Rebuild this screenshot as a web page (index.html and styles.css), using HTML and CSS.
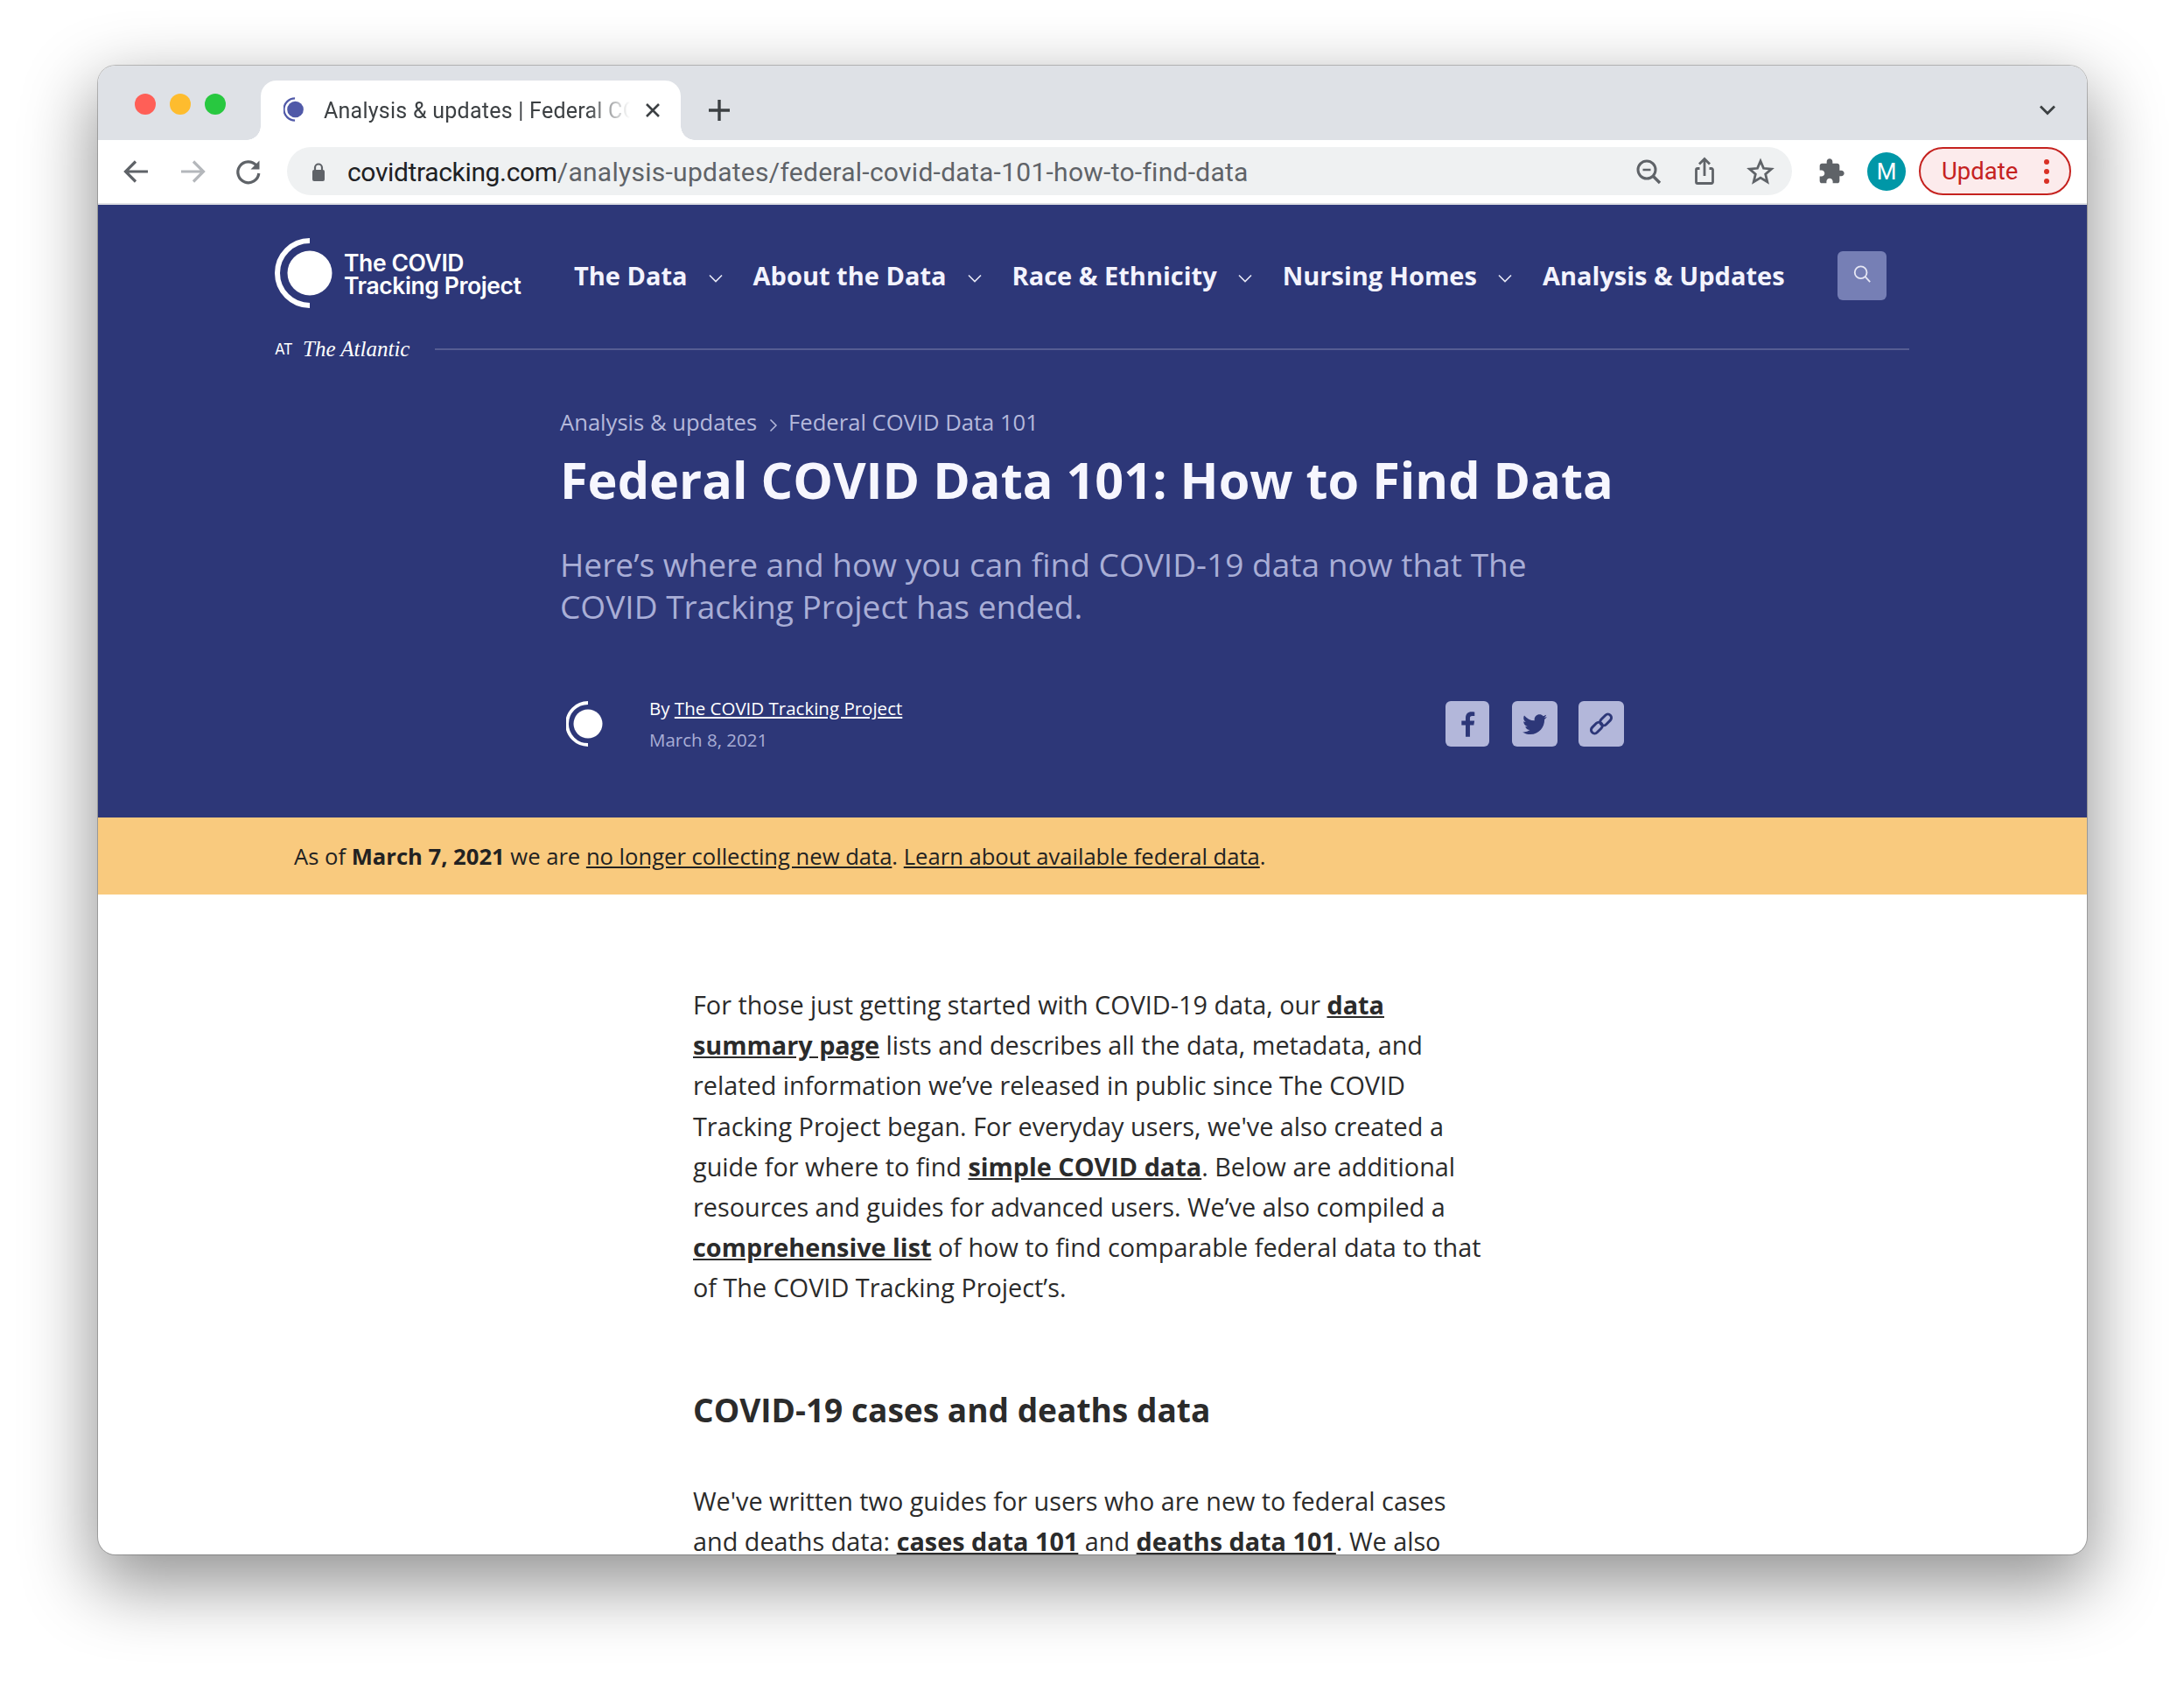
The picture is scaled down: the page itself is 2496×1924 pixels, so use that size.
FILE: index.html
```html
<!DOCTYPE html>
<html lang="en">

<head>
  <meta charset="UTF-8">
  <title>Analysis &amp; updates | Federal COVID Data 101</title>
  <link rel="stylesheet" href="styles.css">
</head>

<body>
  <div class="window">

    <div class="tabstrip">
      <div class="lights">
        <span class="light red"></span>
        <span class="light yellow"></span>
        <span class="light green"></span>
      </div>
      <div class="tab">
        <svg class="favicon" viewBox="0 0 30 30">
          <path d="M14 1.500A13.500 13.500 0 0 0 14 28.500" fill="none" stroke="#5059a8" stroke-width="2.400"/>
          <circle cx="14.500" cy="15" r="10" fill="#5059a8"/>
        </svg>
        <span class="tab-title">Analysis &amp; updates | Federal COVID Data 101</span>
        <svg class="tab-close" viewBox="0 0 20 20"><path d="M3 3l14 14M17 3L3 17" stroke="#3c4043" stroke-width="2.600" fill="none"/></svg>
      </div>
      <svg class="new-tab" viewBox="0 0 26 26"><path d="M13 1v24M1 13h24" stroke="#3c4043" stroke-width="3.400" fill="none"/></svg>
      <svg class="tab-list" viewBox="0 0 20 14"><path d="M2 2.500l8 8 8-8" stroke="#3c4043" stroke-width="2.800" fill="none"/></svg>
    </div>

    <div class="toolbar">
      <svg class="tool" viewBox="0 0 40 40"><path d="M33 20H9M19 8.500L7.500 20 19 31.500" stroke="#5f6368" stroke-width="3.200" fill="none"/></svg>
      <svg class="tool" viewBox="0 0 40 40"><path d="M7 20h24M21 8.500L32.500 20 21 31.500" stroke="#b4b7bb" stroke-width="3.200" fill="none"/></svg>
      <svg class="tool" viewBox="0 0 40 40">
        <path d="M29 13a12 12 0 1 0 2.800 9" stroke="#5f6368" stroke-width="3.200" fill="none"/>
        <path d="M32.500 7.500v10h-10z" fill="#5f6368"/>
      </svg>
      <div class="omnibox">
        <svg class="lock" viewBox="0 0 24 24">
          <path d="M8 11V7.500a4 4 0 0 1 8 0V11" stroke="#5f6368" stroke-width="2.200" fill="none"/>
          <rect x="5" y="10" width="14" height="13" rx="2" fill="#5f6368"/>
        </svg>
        <div class="url"><span class="host">covidtracking.com</span>/analysis-updates/federal-covid-data-101-how-to-find-data</div>
        <svg class="tool" viewBox="0 0 40 40">
          <circle cx="18" cy="18" r="10" stroke="#5f6368" stroke-width="3" fill="none"/>
          <path d="M13.500 18h9" stroke="#5f6368" stroke-width="2.400"/>
          <path d="M25 25l8 8" stroke="#5f6368" stroke-width="3.400"/>
        </svg>
        <svg class="tool" viewBox="0 0 40 40">
          <path d="M14.500 16.500H12a1.500 1.500 0 0 0-1.500 1.500v14A1.500 1.500 0 0 0 12 33.500h16a1.500 1.500 0 0 0 1.500-1.500V18a1.500 1.500 0 0 0-1.500-1.500h-2.500" stroke="#5f6368" stroke-width="2.800" fill="none"/>
          <path d="M20 25V6M14 11.500l6-6 6 6" stroke="#5f6368" stroke-width="2.800" fill="none"/>
        </svg>
        <svg class="tool" viewBox="0 0 40 40"><path d="M20 8l3.500 8.300 9 .8-6.800 5.900 2.100 8.800-7.800-4.700-7.800 4.700 2.100-8.800-6.800-5.900 9-.8z" stroke="#5f6368" stroke-width="2.800" fill="none"/></svg>
      </div>
      <svg class="puzzle" viewBox="0 0 24 24"><path fill="#5f6368" d="M20.500 11H19V7c0-1.100-.9-2-2-2h-4V3.500C13 2.120 11.880 1 10.500 1S8 2.120 8 3.500V5H4c-1.100 0-1.990.9-1.990 2v3.800H3.500c1.490 0 2.700 1.210 2.700 2.700s-1.210 2.700-2.700 2.700H2V20c0 1.100.9 2 2 2h3.800v-1.500c0-1.490 1.210-2.700 2.700-2.700 1.490 0 2.700 1.210 2.700 2.700V22H17c1.100 0 2-.9 2-2v-4h1.500c1.380 0 2.500-1.120 2.500-2.500S21.880 11 20.500 11z"/></svg>
      <div class="avatar">M</div>
      <div class="update">
        <span>Update</span>
        <span class="update-dots"><i></i><i></i><i></i></span>
      </div>
    </div>

    <header class="site-head">
      <div class="nav-row">
        <div class="logo">
          <svg class="logo-mark" viewBox="0 0 66 80">
            <path d="M40 3A37 37 0 0 0 40 77" fill="none" stroke="#fff" stroke-width="6"/>
            <circle cx="40" cy="40" r="25.500" fill="#fff"/>
          </svg>
          <div class="logo-text">The COVID<br>Tracking Project</div>
        </div>
        <nav class="nav">
          <a>The Data</a>
          <svg class="caret" viewBox="0 0 16 10"><path d="M1 1.500l7 7 7-7" stroke="#e8e9f6" stroke-width="1.600" fill="none"/></svg>
          <a>About the Data</a>
          <svg class="caret" viewBox="0 0 16 10"><path d="M1 1.500l7 7 7-7" stroke="#e8e9f6" stroke-width="1.600" fill="none"/></svg>
          <a>Race &amp; Ethnicity</a>
          <svg class="caret" viewBox="0 0 16 10"><path d="M1 1.500l7 7 7-7" stroke="#e8e9f6" stroke-width="1.600" fill="none"/></svg>
          <a>Nursing Homes</a>
          <svg class="caret" viewBox="0 0 16 10"><path d="M1 1.500l7 7 7-7" stroke="#e8e9f6" stroke-width="1.600" fill="none"/></svg>
          <a>Analysis &amp; Updates</a>
        </nav>
        <div class="search-btn">
          <svg viewBox="0 0 24 24"><circle cx="10.500" cy="10" r="7.500" stroke="#e6e7f4" stroke-width="2" fill="none"/><path d="M16 15.500l6 6.500" stroke="#e6e7f4" stroke-width="2"/></svg>
        </div>
      </div>
      <div class="atlantic-row">
        <span class="at">AT</span>
        <span class="atlantic">The Atlantic</span>
        <span class="rule"></span>
      </div>

      <div class="hero">
        <div class="crumbs">
          <span>Analysis &amp; updates</span>
          <svg viewBox="0 0 10 16"><path d="M1.500 1.500L8 8l-6.500 6.500" stroke="#b5b9db" stroke-width="1.500" fill="none"/></svg>
          <span>Federal COVID Data 101</span>
        </div>
        <h1>Federal COVID Data 101: How to Find Data</h1>
        <p class="dek">Here’s where and how you can find COVID-19 data now that The COVID Tracking Project has ended.</p>
        <div class="byline-row">
          <svg class="byline-mark" viewBox="0 0 44 52">
            <path d="M25 2A24 24 0 0 0 25 50" fill="none" stroke="#fff" stroke-width="3.800"/>
            <circle cx="25" cy="26" r="16.500" fill="#fff"/>
          </svg>
          <div class="byline">
            <div class="author">By <a>The COVID Tracking Project</a></div>
            <div class="date">March 8, 2021</div>
          </div>
          <div class="share">
            <div class="share-btn">
              <svg viewBox="0 0 24 24"><path fill="#2d3778" d="M14.200 23v-9.800h3.300l.6-3.800h-3.900V7.200c0-1.200.4-1.900 2-1.900h2V1.800C17.800 1.700 16.700 1.600 15.500 1.600c-3 0-5 1.800-5 5.100v2.700H7v3.800h3.500V23z"/></svg>
            </div>
            <div class="share-btn">
              <svg viewBox="0 0 24 24"><path fill="#2d3778" d="M22.460 6c-.77.35-1.600.58-2.460.69.880-.53 1.560-1.370 1.880-2.380-.83.5-1.750.85-2.720 1.050C18.370 4.500 17.260 4 16 4c-2.350 0-4.270 1.920-4.270 4.290 0 .34.04.67.11.98C8.280 9.090 5.110 7.380 3 4.790c-.37.63-.58 1.370-.58 2.150 0 1.490.75 2.810 1.910 3.560-.71 0-1.370-.2-1.950-.5v.03c0 2.080 1.480 3.820 3.440 4.210a4.220 4.220 0 0 1-1.930.07 4.280 4.280 0 0 0 4 2.980 8.521 8.521 0 0 1-5.330 1.840c-.34 0-.68-.02-1.020-.06C3.440 20.290 5.700 21 8.120 21 16 21 20.330 14.460 20.330 8.790c0-.19 0-.37-.01-.56.84-.6 1.560-1.360 2.140-2.230z"/></svg>
            </div>
            <div class="share-btn">
              <svg viewBox="-2 -2 28 28" fill="none" stroke="#2d3778" stroke-width="2.600">
                <rect x="1" y="12.500" width="13" height="7" rx="3.500" transform="rotate(-45 7.500 16)"/>
                <rect x="10" y="4.500" width="13" height="7" rx="3.500" transform="rotate(-45 16.500 8)"/>
              </svg>
            </div>
          </div>
        </div>
      </div>
    </header>

    <div class="notice">As of <b>March 7, 2021</b> we are <a>no longer collecting new data</a>. <a>Learn about available federal data</a>.</div>

    <main class="article">
      <p>For those just getting started with COVID-19 data, our <a>data summary page</a> lists and describes all the data, metadata, and related information we’ve released in public since The COVID Tracking Project began. For everyday users, we've also created a guide for where to find <a>simple COVID data</a>. Below are additional resources and guides for advanced users. We’ve also compiled a <a>comprehensive list</a> of how to find comparable federal data to that of The COVID Tracking Project’s.</p>
      <h2>COVID-19 cases and deaths data</h2>
      <p>We've written two guides for users who are new to federal cases and deaths data: <a>cases data 101</a> and <a>deaths data 101</a>. We also</p>
    </main>

  </div>
</body>

</html>
```

FILE: styles.css
```css
* {
  box-sizing: border-box;
}

body {
  margin: 0;
  background: #fff;
  font-family: "Open Sans", Arial, sans-serif;
  height: 1924px;
  overflow: hidden;
}

.window {
  width: 2273px;
  height: 1701px;
  margin: 75px 0 0 112px;
  border-radius: 20px;
  overflow: hidden;
  background: #fff;
  box-shadow: 0 0 0 1px rgba(0, 0, 0, .22), 0 30px 80px 6px rgba(0, 0, 0, .42);
}

/* browser chrome */
.tabstrip {
  height: 85px;
  background: #dee1e6;
  display: flex;
  align-items: flex-start;
  position: relative;
}

.lights {
  display: flex;
  gap: 16px;
  padding: 32px 0 0 42px;
  width: 186px;
}

.light {
  width: 24px;
  height: 24px;
  border-radius: 50%;
}

.red { background: #ff5f57; }
.yellow { background: #febc2e; }
.green { background: #28c840; }

.tab {
  width: 480px;
  height: 68px;
  margin-top: 17px;
  background: #fff;
  border-radius: 18px 18px 0 0;
  display: flex;
  align-items: center;
  padding: 0 24px 0 24px;
  position: relative;
}

.tab::before,
.tab::after {
  content: "";
  position: absolute;
  bottom: 0;
  width: 16px;
  height: 16px;
}

.tab::before {
  left: -16px;
  background: radial-gradient(circle at 0 0, #dee1e6 15.500px, #fff 16px);
}

.tab::after {
  right: -16px;
  background: radial-gradient(circle at 100% 0, #dee1e6 15.500px, #fff 16px);
}

.favicon {
  width: 28px;
  height: 30px;
  flex: none;
  margin: -2px 18px 0 2px;
}

.tab-title {
  font-family: Roboto, Arial, sans-serif;
  font-size: 25px;
  letter-spacing: .25px;
  color: #3c4043;
  width: 350px;
  white-space: nowrap;
  overflow: hidden;
  flex: none;
  -webkit-mask-image: linear-gradient(to right, #000 300px, transparent 350px);
  mask-image: linear-gradient(to right, #000 300px, transparent 350px);
}

.tab-close {
  width: 20px;
  height: 20px;
  flex: none;
  margin-left: 16px;
}

.new-tab {
  width: 26px;
  height: 26px;
  margin: 38px 0 0 31px;
}

.tab-list {
  width: 20px;
  height: 14px;
  position: absolute;
  right: 35px;
  top: 44px;
}

.toolbar {
  height: 74px;
  background: #fff;
  border-bottom: 2px solid #dfe1e5;
  display: flex;
  align-items: center;
  padding: 0 18px 1px 24px;
  gap: 24px;
}

.tool {
  width: 40px;
  height: 40px;
  flex: none;
}

.omnibox {
  width: 1720px;
  height: 55px;
  flex: none;
  background: #eff1f2;
  border-radius: 28px;
  display: flex;
  align-items: center;
  gap: 24px;
  padding: 0 16px 0 24px;
}

.lock {
  width: 24px;
  height: 24px;
  flex: none;
  margin-right: -3px;
}

.url {
  flex: 1;
  padding-top: 2px;
  font-family: Roboto, Arial, sans-serif;
  font-size: 30px;
  letter-spacing: .27px;
  color: #5f6368;
  white-space: nowrap;
}

.host {
  color: #202124;
  letter-spacing: -.35px;
}

.puzzle {
  width: 32px;
  height: 32px;
  flex: none;
  margin-left: 5px;
  margin-right: 1px;
}

.avatar {
  width: 44px;
  height: 44px;
  border-radius: 50%;
  background: #0097a7;
  color: #fff;
  font-family: Roboto, Arial, sans-serif;
  font-size: 26px;
  display: flex;
  align-items: center;
  justify-content: center;
  flex: none;
  margin-right: -9px;
}

.update {
  width: 174px;
  height: 55px;
  flex: none;
  border: 2px solid #c5221f;
  border-radius: 28px;
  background: #fcebec;
  display: flex;
  align-items: center;
  justify-content: space-between;
  padding: 0 23px 0 24px;
  font-family: Roboto, Arial, sans-serif;
  font-size: 27.500px;
  color: #c5221f;
}

.update-dots {
  display: flex;
  flex-direction: column;
  gap: 5px;
}

.update-dots i {
  width: 6px;
  height: 6px;
  border-radius: 50%;
  background: #d93025;
}

/* site header */
.site-head {
  height: 700px;
  background: #2d3778;
  padding: 38px 203px 0 202px;
  color: #fff;
}

.nav-row {
  display: flex;
  align-items: center;
  height: 80px;
}

.logo {
  display: flex;
  align-items: center;
  width: 342px;
  flex: none;
}

.logo-mark {
  width: 66px;
  height: 80px;
  flex: none;
  margin-right: 13px;
}

.logo-text {
  font-family: Inter, Arial, sans-serif;
  font-weight: 600;
  font-size: 26.500px;
  line-height: 26px;
  letter-spacing: -.4px;
  margin-top: 1px;
}

.nav {
  display: flex;
  align-items: center;
  color: #f3f3fd;
  font-size: 29px;
  font-weight: 700;
  white-space: nowrap;
  margin-top: 5px;
}

.caret {
  width: 16px;
  height: 10px;
  margin: 6px 35px 0 24px;
  flex: none;
}

.search-btn {
  width: 56px;
  height: 56px;
  margin-left: auto;
  margin-right: 26px;
  margin-top: 5px;
  background: #767fb5;
  border-radius: 6px;
  display: flex;
  align-items: center;
  justify-content: center;
}

.search-btn svg {
  width: 22px;
  height: 22px;
  margin-top: -4px;
}

.atlantic-row {
  display: flex;
  align-items: center;
  height: 40px;
  margin-top: 27px;
}

.at {
  font-family: Inter, Arial, sans-serif;
  font-size: 17px;
  letter-spacing: -.5px;
  width: 32px;
}

.atlantic {
  font-family: "Liberation Serif", serif;
  font-style: italic;
  font-size: 25px;
  width: 151px;
}

.rule {
  flex: 1;
  height: 2px;
  background: #555d92;
}

.hero {
  width: 1216px;
  margin: 46px 0 0 326px;
}

.crumbs {
  display: flex;
  align-items: center;
  font-size: 25.600px;
  line-height: 36px;
  color: #b5b9db;
}

.crumbs svg {
  width: 10px;
  height: 16px;
  margin: 6px 12px 0 14px;
}

h1 {
  margin: 13px 0 0;
  font-size: 57.600px;
  line-height: 68px;
  font-weight: 700;
  white-space: nowrap;
  color: #f6f6fe;
}

.dek {
  margin: 39px 0 0;
  width: 1140px;
  font-size: 37.100px;
  line-height: 48px;
  color: #a9aed6;
}

.byline-row {
  display: flex;
  align-items: center;
  margin-top: 74px;
}

.byline-mark {
  width: 44px;
  height: 52px;
  flex: none;
  margin: 0 51px 0 7px;
}

.byline {
  font-size: 20.500px;
  line-height: 36px;
}

.author a {
  text-decoration: underline;
}

.date {
  color: #a9aed6;
}

.share {
  display: flex;
  gap: 24px;
  margin-left: auto;
}

.share-btn {
  width: 52px;
  height: 52px;
  background: #b3b7da;
  border-radius: 6px;
  display: flex;
  align-items: center;
  justify-content: center;
}

.share-btn:first-child {
  width: 50px;
  margin-right: 2px;
}

.share-btn svg {
  width: 32px;
  height: 32px;
  flex: none;
}

/* notice bar */
.notice {
  height: 88px;
  background: #f9ca7e;
  padding: 1px 0 0 224px;
  display: flex;
  align-items: center;
  white-space: pre-wrap;
  font-size: 25.600px;
  color: #222;
}

.notice a {
  text-decoration: underline;
}

/* article */
.article {
  width: 910px;
  margin-left: 680px;
  padding-top: 103px;
  font-size: 28.800px;
  line-height: 46.200px;
  color: #2b2b2b;
}

.article p {
  margin: 0;
}

.article a {
  font-weight: 700;
  text-decoration: underline;
}

.article h2 {
  margin: 91px 0 56px;
  font-size: 37.100px;
  line-height: 50px;
  font-weight: 700;
}
```
